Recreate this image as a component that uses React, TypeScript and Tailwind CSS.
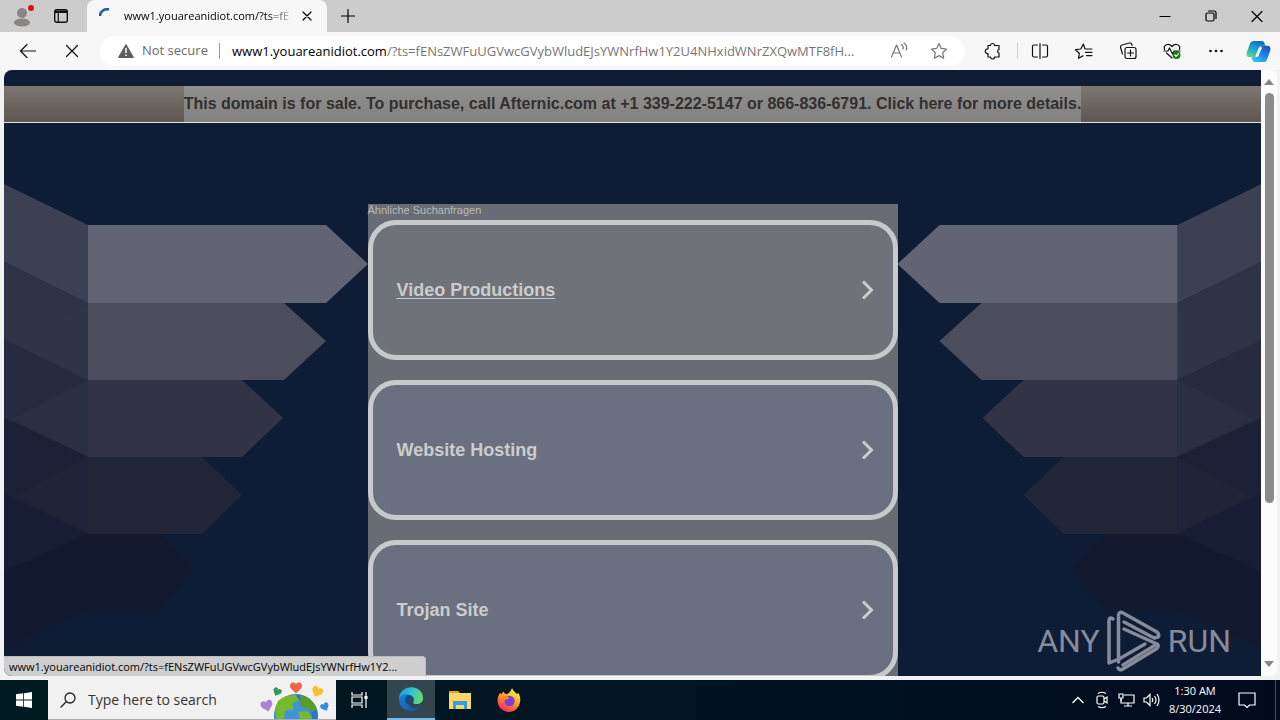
import type { ReactNode } from "react";

function Icon({ children, size = "size-5" }: { children: ReactNode; size?: string }) {
  return (
    <svg
      viewBox="0 0 20 20"
      className={`${size} shrink-0`}
      fill="none"
      stroke="currentColor"
      strokeWidth="1.2"
      strokeLinecap="round"
      strokeLinejoin="round"
      aria-hidden="true"
    >
      {children}
    </svg>
  );
}

function TabStrip() {
  return (
    <div className="flex h-8 shrink-0 items-stretch bg-[#cccccc]">
      <div className="flex w-[87px] shrink-0 items-center gap-5 rounded-br-lg pl-3">
        <button type="button" aria-label="Profile" className="flex">
          <svg viewBox="0 0 22 24" className="h-6 w-[22px]" aria-hidden="true">
            <circle cx="10" cy="9" r="5" fill="#888583" />
            <ellipse cx="10" cy="18.500" rx="8" ry="4" fill="#888583" />
            <circle cx="19" cy="4" r="3" fill="#dc0f16" />
          </svg>
        </button>
        <button type="button" aria-label="Tab actions" className="flex">
          <svg viewBox="0 0 14 14" className="size-[14px]" fill="none" stroke="#111" aria-hidden="true">
            <rect x="0.700" y="0.700" width="12.600" height="12.600" rx="2" strokeWidth="1.400" />
            <path d="M1 2.200h12M1 3.400h12" strokeWidth="1.400" />
            <path d="M4.300 4v9" strokeWidth="1.200" />
          </svg>
        </button>
      </div>
      <div className="flex w-60 shrink-0 items-center rounded-t-lg bg-[#f7f7f7] px-3">
        <svg viewBox="0 0 16 16" className="size-4 shrink-0" fill="none" aria-hidden="true">
          <path d="M1 8A7 7 0 0 1 10 1.500" stroke="#1c5f9c" strokeWidth="2.500" />
        </svg>
        <span className="ml-[9px] w-[173px] bg-gradient-to-r from-black from-85% to-[#bbb] bg-clip-text text-[11px] whitespace-nowrap text-transparent">
          www1.youareanidiot.com/?ts=fE
        </span>
        <button type="button" aria-label="Close tab" className="ml-[10px] flex">
          <Icon size="size-4">
            <path d="M5 5l10 10M15 5L5 15" strokeWidth="1.500" />
          </Icon>
        </button>
      </div>
      <button type="button" aria-label="New tab" className="flex w-[42px] items-center justify-center">
        <Icon>
          <path d="M10 3.500v13M3.500 10h13" />
        </Icon>
      </button>
      <div className="ml-auto flex">
        <button type="button" aria-label="Minimize" className="flex w-[46px] items-center justify-center">
          <Icon>
            <path d="M5 10.500h10" />
          </Icon>
        </button>
        <button type="button" aria-label="Restore" className="flex w-[46px] items-center justify-center">
          <Icon>
            <rect x="5" y="7" width="8" height="8" rx="1.500" />
            <path d="M7.500 5h5.500a2 2 0 0 1 2 2v5.500" />
          </Icon>
        </button>
        <button type="button" aria-label="Close" className="flex w-[46px] items-center justify-center">
          <Icon>
            <path d="M5 5.500l10 10M15 5.500l-10 10" />
          </Icon>
        </button>
      </div>
    </div>
  );
}

const TOOLS = [
  {
    name: "Split screen",
    icon: (
      <path d="M10 2.500v15M7.500 4H4a1.500 1.500 0 0 0-1.500 1.500v9A1.500 1.500 0 0 0 4 16h3.500M12.500 4H16a1.500 1.500 0 0 1 1.500 1.500v9A1.500 1.500 0 0 1 16 16h-3.500" />
    ),
  },
  {
    name: "Favorites",
    icon: (
      <path d="M12 8H11L9.300 3 6.800 8 1.500 8.700 5.300 12.300 4.500 17.300 9 14.900M12.500 8h5.500M11.500 11.300h6.500M12.500 14.600h5.500" />
    ),
  },
  {
    name: "Collections",
    icon: (
      <>
        <rect x="7" y="6.500" width="11" height="11" rx="2" />
        <path d="M12.500 9v6M9.500 12h6M4.500 13L2.600 6.500A2 2 0 0 1 4 4l7.500-2a2 2 0 0 1 2.400 1.500l.3 1" />
      </>
    ),
  },
  {
    name: "Browser essentials",
    icon: (
      <>
        <path d="M2.500 8.500C1 4 6.500 1.500 10 5.500c3.500-4 9-1.500 7.500 3M2 10h4l1.500-3 3 6L12 10h6M4.500 12l5.500 5" />
        <circle cx="14.500" cy="14" r="4" fill="#107c10" stroke="none" />
        <path d="M12.800 14l1.300 1.300 2.300-2.500" stroke="#fff" />
      </>
    ),
  },
  {
    name: "Settings and more",
    icon: (
      <g fill="currentColor" stroke="none">
        <circle cx="4.500" cy="10" r="1.300" />
        <circle cx="10" cy="10" r="1.300" />
        <circle cx="15.500" cy="10" r="1.300" />
      </g>
    ),
  },
];

function Toolbar() {
  return (
    <div className="flex h-[38px] shrink-0 items-center bg-[#f7f7f7] pl-[18px] text-[#111]">
      <button type="button" aria-label="Back" className="flex">
        <Icon>
          <path d="M17.500 10H2.500M9 3.500L2.500 10l6.500 6.500" />
        </Icon>
      </button>
      <button type="button" aria-label="Stop" className="ml-6 flex">
        <Icon>
          <path d="M4.500 4.500l11 11M15.500 4.500l-11 11" />
        </Icon>
      </button>
      <div className="ml-[18px] flex h-[30px] min-w-0 flex-1 items-center rounded-full bg-white pr-4 pl-[17px] text-[13px]">
        <svg viewBox="0 0 18 16" className="h-4 w-[18px] shrink-0" aria-hidden="true">
          <path d="M9 1.500L16.500 14.500H1.500z" fill="#5f5f5f" stroke="#5f5f5f" strokeLinejoin="round" />
          <path d="M9 5v5M9 11.500v1.500" stroke="#fff" strokeWidth="1.500" />
        </svg>
        <span className="ml-[7px] w-[69px] whitespace-nowrap text-[#6b6b6b]">Not secure</span>
        <span className="mr-3 ml-2 h-4 w-px bg-[#999]" />
        <div className="min-w-0 flex-1 leading-6 whitespace-nowrap text-[#767676]">
          <span className="text-black">www1.youareanidiot.com</span>
          /?ts=fENsZWFuUGVwcGVybWludEJsYWNrfHw1Y2U4NHxidWNrZXQwMTF8fH...
        </div>
        <button type="button" aria-label="Read aloud" className="ml-4 flex text-[#767676]">
          <Icon>
            <path d="M2.500 16L7.500 4l5 12M4.200 12h6.600M12.500 3.500c1.500 1 2 2.500 1.500 4.500M15 2c2.500 1.500 3.300 4 2.300 7" />
          </Icon>
        </button>
        <button type="button" aria-label="Add to favorites" className="ml-5 flex text-[#767676]">
          <Icon>
            <path d="M10 2.500l2.300 4.900 5.200.7-3.800 3.700 1 5.400-4.700-2.600-4.700 2.600 1-5.400L2.500 8.100l5.200-.7z" />
          </Icon>
        </button>
      </div>
      <button type="button" aria-label="Extensions" className="ml-[18px] flex">
        <Icon>
          <path d="M5 4.500h2.500a2 2 0 0 1 4 0H16v4a1.800 1.800 0 0 0 0 3.500v4h-4.500a2 2 0 0 1-4 0H5v-3.500a2.300 2.300 0 1 1 0-4.500z" />
        </Icon>
      </button>
      <span className="mr-3 ml-[14px] h-4 w-px bg-[#cfcfcf]" />
      <div className="flex gap-6">
        {TOOLS.map((tool) => (
          <button key={tool.name} type="button" aria-label={tool.name} className="flex">
            <Icon>{tool.icon}</Icon>
          </button>
        ))}
      </div>
      <button type="button" aria-label="Copilot" className="mr-[9px] ml-5 flex">
        <svg viewBox="0 0 26 24" className="h-[23px] w-[25px]" aria-hidden="true">
          <defs>
            <linearGradient id="copilot-a" x1="0.700" y1="0" x2="0.200" y2="1">
              <stop offset="0" stopColor="#1667c9" />
              <stop offset="0.500" stopColor="#16a5cf" />
              <stop offset="1" stopColor="#68d481" />
            </linearGradient>
            <linearGradient id="copilot-b" x1="0.800" y1="0" x2="0.200" y2="1">
              <stop offset="0" stopColor="#1556bd" />
              <stop offset="0.500" stopColor="#1e86e8" />
              <stop offset="1" stopColor="#33c5ef" />
            </linearGradient>
          </defs>
          <path d="M8 1h8c2 0 3 1 3.500 3l.5 2h-3c-2 0-3 1-3.600 3l-1.600 6c-.6 2-1.500 3-3.500 3H4c-3 0-4-2-3.300-5L4 4c.6-2 2-3 4-3z" fill="url(#copilot-a)" />
          <path d="M18 23h-8c-2 0-3-1-3.500-3L6 18h3c2 0 3-1 3.600-3l1.600-6c.6-2 1.500-3 3.500-3H22c3 0 4 2 3.300 5L22 20c-.6 2-2 3-4 3z" fill="url(#copilot-b)" />
          <path d="M13.500 7.500h3.500L12.500 17.500H9.500z" fill="#f2fbff" />
        </svg>
      </button>
    </div>
  );
}

function Banner() {
  return (
    <div className="mt-4 flex shrink-0 justify-center border-b border-[#e2e2e2] bg-gradient-to-b from-[#7f7670] to-[#5d5651]">
      <a
        href="#details"
        className="h-9 bg-gradient-to-b from-[#92908e] to-[#838180] text-base leading-[35px] font-bold whitespace-nowrap text-[#303030]"
      >
        This domain is for sale. To purchase, call Afternic.com at +1 339-222-5147 or 866-836-6791. Click here for more
        details.
      </a>
    </div>
  );
}

// Five stacked arrows folding off the outer edge; drawn for the left side and mirrored for the right.
function Arrows({ mirrored = false }: { mirrored?: boolean }) {
  return (
    <div
      className={
        mirrored
          ? "flex min-w-0 flex-1 -scale-x-100 justify-end overflow-hidden"
          : "flex min-w-0 flex-1 justify-end overflow-hidden"
      }
    >
      <svg viewBox="4 123 364 553" className="h-[553px] w-[364px] shrink-0" aria-hidden="true">
        <path d="M4 184L88 225V303L4 262z" fill="#3d4053" />
        <path d="M88 225H326L368 264L326 303H88z" fill="#636473" />
        <path d="M4 262L88 303V380L4 340z" fill="#2f3346" />
        <path d="M88 303V380L8 342z" fill="#313447" />
        <path d="M88 303H284L326 341L284 380H88z" fill="#4b4d5c" />
        <path d="M4 340L88 380V457L4 418z" fill="#282b3f" />
        <path d="M88 380V457L12 419z" fill="#2c2e42" />
        <path d="M88 380H242L283 418L242 457H88z" fill="#323347" />
        <path d="M4 418L88 457V534L4 494z" fill="#1d2036" />
        <path d="M88 457V534L15 496z" fill="#202438" />
        <path d="M88 457H202L242 495L202 534H88z" fill="#212638" />
        <path d="M4 494L88 534L4 572z" fill="#171d34" />
        <path d="M88 534V611L4 648V572z" fill="#13192e" />
        <path d="M88 534H160L193 570L158 611H88z" fill="#131a2f" />
      </svg>
    </div>
  );
}

function SearchLink({ label, active = false }: { label: string; active?: boolean }) {
  return (
    <a
      href="#results"
      className={
        active
          ? "mb-5 flex h-[140px] shrink-0 items-center justify-between rounded-[28px] border-5 border-[#c8c9cb] bg-[#707279] pr-[18px] pl-6 text-[#cccccc] underline underline-offset-2"
          : "mb-5 flex h-[140px] shrink-0 items-center justify-between rounded-[28px] border-5 border-[#c8c9cb] bg-[#6a7080] pr-[18px] pl-6 text-[#cccccc]"
      }
    >
      <span className="text-lg font-bold">{label}</span>
      <svg viewBox="0 0 14 20" className="h-5 w-[14px]" fill="none" stroke="currentColor" strokeWidth="3" aria-hidden="true">
        <path d="M2 1.500L10.500 10L2 18.500" />
      </svg>
    </a>
  );
}

function Watermark() {
  return (
    <div className="absolute right-[30px] bottom-1 flex items-center gap-[7px] font-[Roboto,sans-serif] text-[32px] leading-none text-[#868b9c]">
      <span>ANY</span>
      <svg
        viewBox="0 0 54 62"
        className="h-[62px] w-[54px]"
        fill="none"
        stroke="#868b9c"
        strokeWidth="3.500"
        strokeLinecap="round"
        strokeLinejoin="round"
        aria-hidden="true"
      >
        <path d="M6 9Q2 6 2 11V53L12 49" />
        <path d="M11.500 52V5Q12 1 16 3L50 22Q53 25 51 27L47 28L17 12" />
        <path d="M17 19L50 34L16 55" />
        <path d="M50 34Q53 36 49 39L16 59Q13 61 11 58M12 49L38 34" />
      </svg>
      <span>RUN</span>
    </div>
  );
}

function Viewport() {
  return (
    <main className="relative mr-[3px] ml-1 flex min-h-0 flex-1 overflow-hidden rounded-lg bg-white">
      <div className="relative flex min-w-0 flex-1 flex-col overflow-hidden bg-[#0f1c35] font-['Liberation_Sans',Arial,sans-serif]">
        <Banner />
        <div className="flex min-h-0 flex-1 overflow-hidden">
          <Arrows />
          <section className="mt-[81px] flex w-[530px] shrink-0 flex-col bg-[#6a6c75]">
            <h1 className="h-4 shrink-0 text-[11px] leading-3 text-[#b8b8b8]">Ähnliche Suchanfragen</h1>
            <SearchLink label="Video Productions" active />
            <SearchLink label="Website Hosting" />
            <SearchLink label="Trojan Site" />
          </section>
          <Arrows mirrored />
        </div>
        <Watermark />
      </div>
      <div className="flex w-4 shrink-0 flex-col items-center bg-[#fcfcfc] py-[9px]">
        <svg viewBox="0 0 10 6" className="h-[6px] w-[10px]" aria-hidden="true">
          <path d="M0 6L5 0L10 6z" fill="#868686" />
        </svg>
        <div className="mt-2 min-h-0 w-[9px] flex-[409] rounded-full bg-[#8b8b8b]" />
        <div className="min-h-0 flex-[158]" />
        <svg viewBox="0 0 10 6" className="h-[6px] w-[10px]" aria-hidden="true">
          <path d="M0 0L5 6L10 0z" fill="#868686" />
        </svg>
      </div>
      <div className="absolute bottom-0 left-0 h-5 min-w-[422px] rounded-tr border-t border-r border-[#bdbdbd] bg-[#cfcfcf] pr-2 pl-[5px] text-[11px] leading-[19px] whitespace-nowrap text-black">
        www1.youareanidiot.com/?ts=fENsZWFuUGVwcGVybWludEJsYWNrfHw1Y2...
      </div>
    </main>
  );
}

function EarthArt() {
  const heart = "M0 4L-4 0Q-5-4-2-4Q0-4 0-2Q0-4 2-4Q5-4 4 0z";
  return (
    <svg viewBox="0 0 72 38" className="h-[38px] w-[72px]" aria-hidden="true">
      <circle cx="36" cy="35" r="22" fill="#2c76c9" />
      <circle cx="33" cy="37" r="19" fill="#3e93dc" />
      <path d="M18 20Q25 13 36 14L39 19L32 23L34 28L25 30L24 38H17Q13 29 18 20z" fill="#76b82f" />
      <path d="M41 14Q52 17 57 28L52 31L48 27L42 27L40 21z" fill="#5b9e27" />
      <path d="M38 31L47 30L52 36L50 40H40z" fill="#76b82f" />
      <path d={heart} transform="translate(36 7) scale(1.400)" fill="#ee6547" />
      <path d={heart} transform="translate(17 11) rotate(25)" fill="#2c9c61" />
      <path d={heart} transform="translate(57 11) rotate(25) scale(1.300)" fill="#f7c02f" />
      <path d={heart} transform="translate(7 25) rotate(-15) scale(1.400)" fill="#a985d5" />
      <path d={heart} transform="translate(65 26) rotate(-25)" fill="#3690d6" />
    </svg>
  );
}

function EdgeLogo() {
  return (
    <svg viewBox="0 0 24 24" className="size-6" aria-hidden="true">
      <defs>
        <linearGradient id="edge-top" x1="0" y1="0.300" x2="1" y2="0.600">
          <stop offset="0" stopColor="#239bdf" />
          <stop offset="0.500" stopColor="#35c1d0" />
          <stop offset="1" stopColor="#66df65" />
        </linearGradient>
        <linearGradient id="edge-base" x1="0" y1="0" x2="0.600" y2="1">
          <stop offset="0" stopColor="#1785d5" />
          <stop offset="1" stopColor="#125ab5" />
        </linearGradient>
      </defs>
      <path d="M0 12C0 3 8-1 15 .4C21 1.700 24 6.500 24 11c0 4-3 6-6.500 6-2.500 0-4-1-3-2.500C16 11 13.500 8 9.500 8 5 8 1 9 0 12z" fill="url(#edge-top)" />
      <path d="M0 12C1 8.500 4.500 7 8 7.300c3 .2 5.400 1.700 5.400 4.200C9 10.500 7 16 11 19.500c3 2.600 8 1.500 10.500-.3C18 24.500 11 25 6 22.500 2 20.500 0 16.500 0 12z" fill="url(#edge-base)" />
      <path d="M9 8c3 .5 5 2 4.600 3.500C10 11 8 14 9.500 17.500 5 16 5 10 9 8z" fill="#0d4a94" />
    </svg>
  );
}

function FolderLogo() {
  return (
    <svg viewBox="0 0 22 20" className="h-5 w-[22px]" aria-hidden="true">
      <path d="M0 1h9l2 2h11v5H0z" fill="#e7a421" />
      <path d="M0 3h22v16H0z" fill="#fbd76b" />
      <path d="M4 11h14v8h-3v-4H7v4H4z" fill="#3b9be0" />
    </svg>
  );
}

function FirefoxLogo() {
  return (
    <svg viewBox="0 0 24 24" className="size-6" aria-hidden="true">
      <defs>
        <linearGradient id="fox" x1="0.800" y1="0.100" x2="0.300" y2="1">
          <stop offset="0" stopColor="#fff14a" />
          <stop offset="0.500" stopColor="#ff9326" />
          <stop offset="1" stopColor="#f6245a" />
        </linearGradient>
      </defs>
      <path d="M15 0c1 3 3.500 4 5 6 1-.3 1-.8 1-1.500 2 3 2.700 6 2 9.500C22 20 17.500 24 12 24 5.500 24 .5 19 .5 12.500c0-3 1-6 3-8 .2 1 .4 1.500 1 2C5 5 6 4 7 3.500c0 1.500.8 2.500 2.500 2.800C12.500 5 14 3 15 0z" fill="url(#fox)" />
      <circle cx="12.500" cy="13" r="5.200" fill="#7840d5" />
      <path d="M5 9c3-2 6-1 7.500 1.500-2 0-3 1.500-5.500 2z" fill="#ff8a25" />
    </svg>
  );
}

function Taskbar() {
  return (
    <footer className="flex h-10 shrink-0 items-stretch bg-gradient-to-r from-[#001a22] via-[#001421] to-[#020b1e] text-white">
      <button type="button" aria-label="Start" className="flex w-12 items-center justify-center">
        <svg viewBox="0 0 16 16" className="size-4" fill="#fff" aria-hidden="true">
          <path d="M0 2.300L7.200 1.300V7.600H0zM8 1.200L16 0V7.600H8zM0 8.400H7.200V14.700L0 13.700zM8 8.400H16V16L8 14.800z" />
        </svg>
      </button>
      <label className="flex w-72 items-center border-b border-[#aaa] bg-[#f1f1f1] pl-3 text-[#222]">
        <svg viewBox="0 0 16 16" className="size-4 shrink-0" fill="none" stroke="#222" strokeWidth="1.300" aria-hidden="true">
          <circle cx="10" cy="6" r="5" />
          <path d="M6.500 9.500L.5 15.500" />
        </svg>
        <input
          type="text"
          aria-label="Search"
          placeholder="Type here to search"
          className="ml-3 w-[160px] bg-transparent text-sm outline-none placeholder:text-[#333]"
        />
        <span className="ml-3">
          <EarthArt />
        </span>
      </label>
      <button type="button" aria-label="Task view" className="flex w-[51px] items-center justify-center pr-1">
        <svg viewBox="0 0 17 16" className="h-4 w-[17px]" fill="none" stroke="#fff" strokeWidth="1.200" aria-hidden="true">
          <path d="M1 0v3h10V0M1 16v-3h10v3M1 5h10v6H1zM15 0v16" />
          <path d="M13.500 5.500h3" strokeWidth="3" />
        </svg>
      </button>
      <button type="button" aria-label="Microsoft Edge" className="flex w-12 items-center justify-center border-b-2 border-[#76b9ed] bg-[#33454e]">
        <EdgeLogo />
      </button>
      <button type="button" aria-label="File Explorer" className="flex w-[50px] items-center justify-center">
        <FolderLogo />
      </button>
      <button type="button" aria-label="Firefox" className="flex w-12 items-center justify-center">
        <FirefoxLogo />
      </button>
      <div className="ml-auto flex items-center">
        <button type="button" aria-label="Show hidden icons" className="flex">
          <svg viewBox="0 0 12 8" className="h-2 w-3" fill="none" stroke="#fff" strokeWidth="1.300" aria-hidden="true">
            <path d="M.5 7L6 1.500L11.500 7" />
          </svg>
        </button>
        <svg viewBox="0 0 12 18" className="ml-3 h-[18px] w-3" fill="none" stroke="#fff" strokeWidth="1.200" aria-hidden="true">
          <rect x="1" y="5" width="7" height="8" rx="1.500" />
          <path d="M8 8l3-2v6l-3-2M2 2.500Q6 0 10 2.500M2 15.500Q6 18 10 15.500" />
        </svg>
        <svg viewBox="0 0 17 14" className="ml-[10px] h-[14px] w-[17px]" fill="none" stroke="#fff" strokeWidth="1.200" aria-hidden="true">
          <path d="M6 2h10v8H3V6M10 10v3M6 13h8" />
          <path d="M1 1h4v4H1zM3 5v3" />
        </svg>
        <svg viewBox="0 0 17 14" className="ml-2 h-[14px] w-[17px]" fill="none" stroke="#fff" strokeWidth="1.200" aria-hidden="true">
          <path d="M1 5h2.500L7 1.500v11L3.500 9H1zM9 5q1.500 2 0 4M11.500 3q3 4 0 8M14 1q4 6 0 12" />
        </svg>
        <time className="ml-2 w-[54px] text-center text-[11px] leading-[18px] whitespace-nowrap">
          1:30 AM
          <br />
          8/30/2024
        </time>
        <button type="button" aria-label="Notifications" className="ml-4 flex">
          <svg viewBox="0 0 18 17" className="h-[17px] w-[18px]" fill="none" stroke="#fff" strokeWidth="1.200" aria-hidden="true">
            <path d="M1 1h16v12h-5.500L9 15.500 6.500 13H1z" />
          </svg>
        </button>
        <span className="ml-[19px] h-10 w-px bg-[#4b5363]" />
        <span className="w-1" />
      </div>
    </footer>
  );
}

export default function App() {
  return (
    <div className="flex h-screen flex-col overflow-hidden bg-[#f1f2f4] font-['Open_Sans','Noto_Sans',sans-serif]">
      <TabStrip />
      <Toolbar />
      <Viewport />
      <div className="h-1 shrink-0" />
      <Taskbar />
    </div>
  );
}
